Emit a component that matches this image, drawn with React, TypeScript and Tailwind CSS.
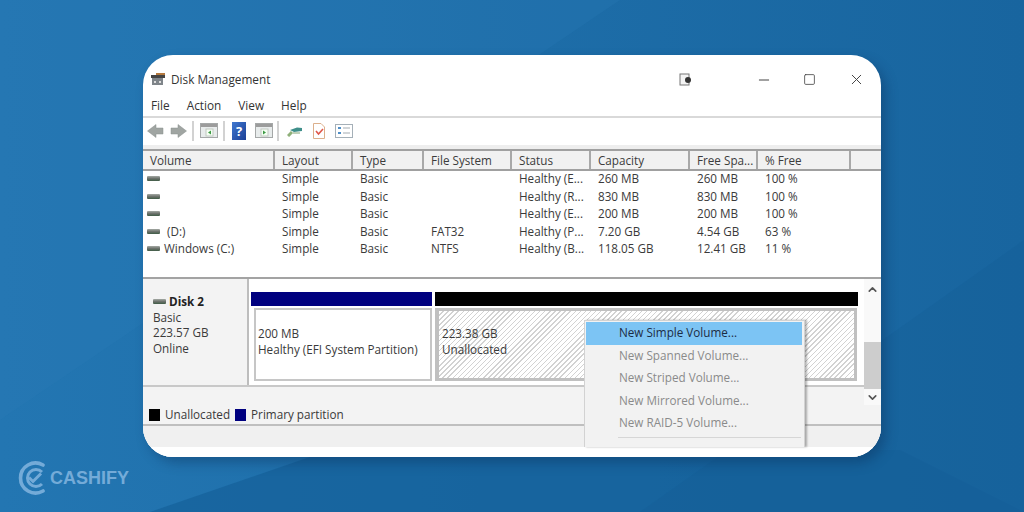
import { ChevronDown, ChevronUp, Minus, Square, X } from "lucide-react";

const font = "font-['Open_Sans',sans-serif]";
const cols = "grid grid-cols-[132px_78px_71px_88px_79px_99px_68px_93px_30px]";

const headers = ["Volume", "Layout", "Type", "File System", "Status", "Capacity", "Free Spa...", "% Free", ""];

const rows = [
  ["", "Simple", "Basic", "", "Healthy (E...", "260 MB", "260 MB", "100 %"],
  ["", "Simple", "Basic", "", "Healthy (R...", "830 MB", "830 MB", "100 %"],
  ["", "Simple", "Basic", "", "Healthy (E...", "200 MB", "200 MB", "100 %"],
  ["\u00a0(D:)", "Simple", "Basic", "FAT32", "Healthy (P...", "7.20 GB", "4.54 GB", "63 %"],
  ["Windows (C:)", "Simple", "Basic", "NTFS", "Healthy (B...", "118.05 GB", "12.41 GB", "11 %"],
];

const menuItems = ["New Spanned Volume...", "New Striped Volume...", "New Mirrored Volume...", "New RAID-5 Volume..."];

const DriveIcon = () => (
  <span className="w-[13px] h-[5px] shrink-0 rounded-[1px] bg-gradient-to-b from-[#a5aaa5] via-[#6d736d] to-[#3f5c46]" />
);

const Separator = ({ className }: { className: string }) => (
  <span className={`w-[2px] h-[20px] bg-[#d2d2d2] ${className}`} />
);

const ToolPanelIcon = ({ color, dir }: { color: string; dir: "left" | "right" }) => (
  <svg width="18" height="15" viewBox="0 0 18 15">
    <rect x="0.5" y="0.5" width="17" height="14" fill="#e8ecec" stroke="#a5a8a8" />
    <rect x="1" y="1" width="16" height="3" fill="#9c9c9c" />
    <rect x="6" y="6" width="7" height="7" fill="#f4fff2" stroke="#c2c8c2" />
    <path d={dir === "left" ? "M11 7.5 L8 9.5 L11 11.5 Z" : "M8 7.5 L11 9.5 L8 11.5 Z"} fill={color} />
  </svg>
);

const NavArrow = ({ flip, className }: { flip?: boolean; className?: string }) => (
  <svg width="17" height="14" viewBox="0 0 17 14" className={className}>
    <path
      d={flip ? "M1 4 H8 V0.5 L16.5 7 L8 13.5 V10 H1 Z" : "M16 4 H9 V0.5 L0.5 7 L9 13.5 V10 H16 Z"}
      fill="#a0a5a2"
      stroke="#8b918e"
      strokeWidth="0.5"
    />
  </svg>
);

const Toolbar = () => (
  <div className="h-[27px] flex items-center pl-[4px] pb-[2px] bg-white">
    <NavArrow />
    <NavArrow flip className="ml-[6px]" />
    <Separator className="ml-[5px]" />
    <span className="ml-[6px] flex">
      <ToolPanelIcon color="#3d9a45" dir="left" />
    </span>
    <Separator className="ml-[5px]" />
    <span className="ml-[7px] w-[14px] h-[18px] bg-gradient-to-br from-[#3f78d0] to-[#1d3f95] text-white text-[13px] leading-[18px] text-center font-bold">?</span>
    <span className="ml-[9px] flex">
      <ToolPanelIcon color="#3d9a45" dir="right" />
    </span>
    <Separator className="ml-[4px]" />
    <svg width="16" height="13" viewBox="0 0 16 13" className="ml-[8px]">
      <path d="M1 12 L5 8" stroke="#8fb07a" strokeWidth="3" />
      <path d="M3 6 L10 3.5 L15 4 L15 7 L7 8 Z" fill="#3f8f8a" />
      <rect x="6" y="8" width="7" height="2" fill="#bfd0b8" />
    </svg>
    <svg width="12" height="16" viewBox="0 0 12 16" className="ml-[10px]">
      <path d="M0.5 0.5 H8 L11.5 4 V15.5 H0.5 Z" fill="#fff" stroke="#dcb08c" />
      <path d="M3 8 L5.5 11 L10 6" stroke="#e0574a" strokeWidth="1.6" fill="none" />
    </svg>
    <svg width="18" height="14" viewBox="0 0 18 14" className="ml-[10px]">
      <rect x="0.5" y="0.5" width="17" height="13" fill="#fff" stroke="#a5b0b8" />
      <path d="M3 4 H6 M3 9 H6" stroke="#4f8fc8" strokeWidth="2" />
      <path d="M8 4 H15 M8 9 H15" stroke="#c2c8cc" strokeWidth="1.5" />
    </svg>
  </div>
);

const VolumeTable = () => (
  <div className="h-[130px] bg-white border-b-2 border-[#a3a3a3]">
    <div className={`${cols} h-[22px] border-y-2 border-[#a0a0a0] bg-[#f1f1f1] text-[11.7px] leading-[18px] text-[#3c3c3c]`}>
      {headers.map((h, i) => (
        <div key={i} className="pl-[7px] border-r-2 border-[#a8a8a8] last:border-r-0 whitespace-nowrap">
          {h}
        </div>
      ))}
    </div>
    <div className="-mt-px">
      {rows.map((row, i) => (
        <div key={i} className={`${cols} h-[17.5px] text-[11.7px] leading-[17px] text-[#3a3a3a]`}>
          {row.map((cell, j) => (
            <div key={j} className={`whitespace-nowrap ${j === 0 ? "pl-[4px] flex items-center gap-[4px]" : "pl-[7px]"}`}>
              {j === 0 && <DriveIcon />}
              {cell}
            </div>
          ))}
        </div>
      ))}
    </div>
  </div>
);

const DiskPane = () => (
  <div className="relative flex-1 flex flex-col bg-[#f3f3f3] text-[11.7px] text-[#3a3a3a]">
    <div className="flex">
      <div className="flex-1 flex flex-col">
        <div className="flex h-[108px] border-b-2 border-[#c8c8c8]">
          <div className="w-[106px] border-r-2 border-[#bdbdbd] pl-[10px] pt-[15px] leading-[15.6px]">
            <div className="flex items-center gap-[3px] font-bold text-[#222]">
              <DriveIcon />
              Disk 2
            </div>
            <div>Basic</div>
            <div>223.57 GB</div>
            <div>Online</div>
          </div>
          <div className="flex-1 bg-white pl-[2px] pt-[13px]">
            <div className="flex gap-[3px] h-[14px]">
              <div className="w-[181px] bg-[#00007f]" />
              <div className="w-[423px] bg-black" />
            </div>
            <div className="flex gap-[3px] h-[73px] mt-[2px] leading-[15.6px]">
              <div className="w-[181px] pl-[3px]">
                <div className="h-full border-2 border-[#c6c6c6] flex flex-col justify-center pb-[5px] pl-[2px] whitespace-nowrap bg-white">
                  <div>200 MB</div>
                  <div>Healthy (EFI System Partition)</div>
                </div>
              </div>
              <div className="w-[422px] border-[3px] border-l-4 border-[#c0c0c0] flex flex-col justify-center pb-[5px] pl-[3px] bg-[repeating-linear-gradient(135deg,#ffffff_0,#ffffff_2.6px,#d2d2d2_2.6px,#d2d2d2_3.6px)]">
                <div>223.38 GB</div>
                <div>Unallocated</div>
              </div>
            </div>
          </div>
        </div>
        <div className="h-[18px]" />
      </div>
      <div className="w-[17px] flex flex-col items-center bg-[#f9f9f9] text-[#555]">
        <ChevronUp size={13} strokeWidth={3} className="mt-[4px]" />
        <div className="w-full h-[47px] mt-[46px] bg-[#cdcdcd]" />
        <ChevronDown size={13} strokeWidth={3} className="mt-[2px]" />
      </div>
    </div>
    <div className="h-[21px] flex items-center border-b-2 border-[#bfbfbf] pl-[6px] pt-px">
      <span className="w-[11px] h-[12px] bg-black mr-[5px]" />
      Unallocated
      <span className="w-[11px] h-[12px] bg-[#00007f] ml-[5px] mr-[5px]" />
      Primary partition
    </div>
    <div className="h-[21px] bg-[#f0f0f0]" />
    <div className="h-[10px] bg-white" />

    <div className="absolute left-[441px] top-[41px] w-[221px] h-[127px] bg-[#f2f2f2] border-x border-t border-[#d2d2d2] shadow-[2px_0_2px_rgba(0,0,0,0.3)] pt-px pl-px overflow-hidden">
      <div className="h-[23px] w-[216px] bg-[#7cc4f4] pl-[33px] leading-[21px] text-[#1c2c44] whitespace-nowrap">New Simple Volume...</div>
      <div className="-mt-[1.5px]">
        {menuItems.map((m) => (
          <div key={m} className="h-[22.5px] pl-[33px] leading-[22.5px] text-[#8a8a8a] whitespace-nowrap">
            {m}
          </div>
        ))}
      </div>
      <div className="h-px ml-[32px] mr-[3px] mt-[3px] bg-[#d6d6d6]" />
    </div>
  </div>
);

const CashifyLogo = () => (
  <div className="flex items-center">
    <svg width="31" height="34" viewBox="0 0 31 34" fill="none">
      <path d="M25 4 A15 15 0 1 0 25 30" stroke="#74abd8" strokeWidth="3.6" strokeLinecap="round" />
      <path d="M24 11 A8.5 8.5 0 1 0 24 23" stroke="#74abd8" strokeWidth="3" />
      <path d="M11 16.5 L15 20.5 L23 12.5" stroke="#74abd8" strokeWidth="3" />
    </svg>
    <span className="ml-[1px] text-[18px] font-bold text-[#74abd8] font-['Liberation_Sans',sans-serif]">CASHIFY</span>
  </div>
);

export default function App() {
  return (
    <div className={`relative w-[1024px] h-[512px] pt-[55px] overflow-hidden ${font} bg-gradient-to-r from-[#2376b2] to-[#18659f]`}>
      <svg className="absolute inset-0" width="1024" height="512" viewBox="0 0 1024 512">
        <polygon points="0,0 620,0 0,420" fill="#2a7db9" opacity="0.25" />
        <polygon points="150,512 330,450 900,450 1024,512" fill="#16629b" opacity="0.75" />
        <polygon points="640,512 1024,240 1024,512" fill="#145c94" opacity="0.3" />
      </svg>

      <div className="relative ml-[143px] w-[738px] h-[402px] rounded-[30px] overflow-hidden bg-white flex flex-col shadow-[5px_6px_12px_rgba(8,40,80,0.35)]">
        <div className="h-[40px] flex items-center pl-[7px] pt-[9px] text-[#333] text-[11.8px] whitespace-nowrap">
          <svg width="16" height="15" viewBox="0 0 16 15" className="shrink-0">
            <rect x="1" y="3" width="14" height="3" fill="#444" />
            <rect x="6" y="1" width="9" height="2" fill="#b5793e" />
            <rect x="2" y="6" width="11" height="7" fill="#7f858a" />
            <rect x="4" y="9" width="2" height="2" fill="#ddd" />
            <rect x="9" y="9" width="2" height="2" fill="#ddd" />
          </svg>
          <span className="ml-[5px]">Disk Management</span>
          <svg width="13" height="13" viewBox="0 0 13 13" className="ml-[409px] shrink-0">
            <rect x="1" y="1" width="9" height="11" fill="#f4f4f4" stroke="#777" />
            <circle cx="9" cy="7" r="3" fill="#333" />
          </svg>
          <Minus size={16} strokeWidth={1.5} className="ml-[64px] shrink-0 text-[#444]" />
          <Square size={13} strokeWidth={1.5} className="ml-[31px] shrink-0 text-[#444]" />
          <X size={17} strokeWidth={1.4} className="ml-[32px] shrink-0 text-[#444]" />
        </div>
        <div className="h-[23px] flex items-center pl-[8px] border-b-2 border-[#d9d9d9] text-[11.8px] text-[#333]">
          <span>File</span>
          <span className="ml-[17px]">Action</span>
          <span className="ml-[17px]">View</span>
          <span className="ml-[17px]">Help</span>
        </div>
        <Toolbar />
        <div className="h-[4px] bg-[#eeeeee]" />
        <VolumeTable />
        <DiskPane />
      </div>

      <div className="absolute left-[18px] bottom-[17px]">
        <CashifyLogo />
      </div>
    </div>
  );
}
